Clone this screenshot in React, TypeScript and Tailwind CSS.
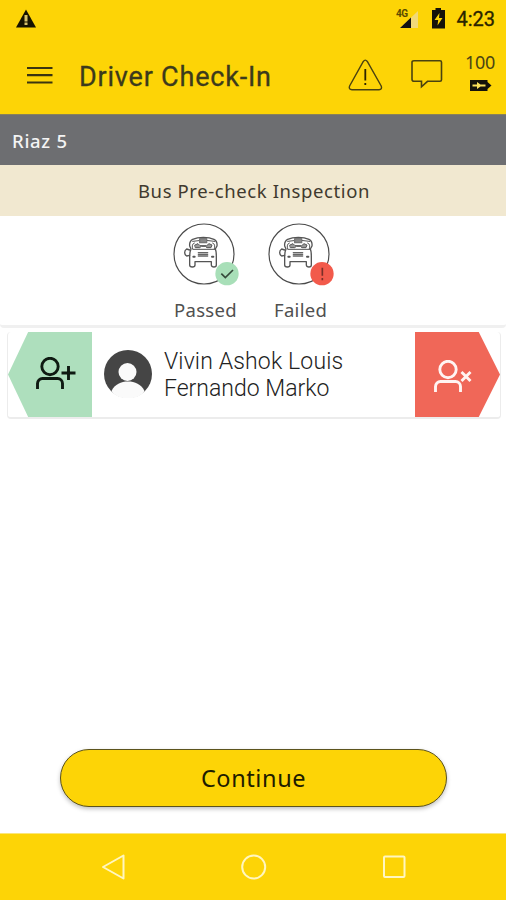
import type { ReactNode } from 'react';

function BusIcon({ children }: { children: ReactNode }) {
  return (
    <svg viewBox="62 32 210 198" className="h-[66px] w-[70px] ml-[7px]" fill="none">
      <circle cx="161" cy="131" r="90" stroke="#4a4a4a" strokeWidth="3.5" />
      <g stroke="#555" strokeWidth="4" strokeLinejoin="round" strokeLinecap="round">
        <path d="M118 140c0-12 1-18 4-24l-4-9c-1-10 3-17 9-20 17-8 47-8 64 0 8 4 10 11 9 20l-5 9c3 6 3 12 3 24v24c0 8-14 8-15 0v-10h-49v10c0 8-16 8-16 0z" />
        <path d="M127 93q32-8 66 0" strokeWidth="3" />
        <path d="M148 85h21v12h-21z" fill="#888" stroke="#777" />
        <path d="M127 116c-3-8-1-17 5-18M192 116c3-8 1-17-5-18" strokeWidth="3" />
        <path d="M134 104l9-4 6 6h20l7-6 9 4-3 8h-12l-5-4h-12l-5 4h-12z" fill="#999" strokeWidth="3" />
        <path d="M128 117h65" strokeWidth="3" />
        <path d="M118 119l-9-3c-8 5-8 16 0 21l9-2" />
        <path d="M144 127h28M144 132h28M144 137h28" stroke="#666" />
        <path d="M129 139h4M185 139h4" strokeWidth="6" />
      </g>
      {children}
    </svg>
  );
}

function PersonIcon() {
  return (
    <>
      <circle cx="14" cy="9.5" r="8.2" />
      <path d="M1.5 32v-5.5a5 5 0 0 1 5-5h15a5 5 0 0 1 5 5V32" />
    </>
  );
}

function StatusBar() {
  return (
    <div className="flex h-[37px] items-center pl-[15px] pr-[11px]">
      <svg viewBox="0 0 22 20" className="h-5 w-[22px]">
        <path d="M11 0.5L21 18.5H1z" fill="#171300" />
        <path d="M11 6v6.5M11 13.5v2.5" stroke="#d9c36a" strokeWidth="3" />
      </svg>
      <div className="ml-auto flex items-center">
        <svg viewBox="0 0 26 22" className="h-[22px] w-[26px] mr-[11px]">
          <path d="M24 3v17H6z" fill="#f1d978" />
          <path d="M17 9.5v10.5H6z" fill="#111" />
          <text x="2" y="9" fontSize="10" fontWeight="700" fontFamily="Roboto, sans-serif" fill="#5b4b00" textLength="12">4G</text>
        </svg>
        <svg viewBox="0 0 15 21" className="h-[21px] w-[15px] mr-[10px]">
          <path d="M4.5 0h5.500v2H14v18.500H1V2h3.500z" fill="#15120a" />
          <path d="M8.500 5L3.500 12h3.700l-.7 5.500 5-7.500H8z" fill="#fbd405" />
        </svg>
        <span className="font-[Roboto,sans-serif] text-[20px] leading-none text-[#2a2400] [-webkit-text-stroke:0.3px_#2a2400]">4:23</span>
      </div>
    </div>
  );
}

function Header() {
  return (
    <header className="flex h-[77px] pl-[27px]">
      <svg viewBox="0 0 26 18" className="mt-[29px] h-[18px] w-[26px]" stroke="#3a3410" strokeWidth="2.2">
        <path d="M0 2h25.500M0 9.200h25.500M0 16.500h25.500" />
      </svg>
      <h1 className="ml-[26px] mt-[24px] w-[200px] whitespace-nowrap font-[Roboto,sans-serif] text-[27px] leading-8 tracking-[0.8px] text-[#3c3a1c] [-webkit-text-stroke:0.3px_#3c3a1c]">
        Driver Check-In
      </h1>
      <svg viewBox="0 0 35 32" className="ml-[69px] mt-[22px] h-8 w-[35px] shrink-0" fill="none" stroke="#4a4210" strokeWidth="1.400">
        <path d="M15.300 2.500Q17.300-.2 19.300 2.500L33.200 27Q34.500 30.500 31 30.700H4Q.3 30.500 1.600 27z" />
        <path d="M17.300 10v11.500M17.300 24v2" stroke="#2b2500" strokeWidth="1.800" />
      </svg>
      <svg viewBox="0 0 34 30" className="ml-[27px] mt-[22px] h-[30px] w-[34px] shrink-0" fill="none" stroke="#4a4210" strokeWidth="1.600">
        <path d="M4 1.800h26q1.500 0 1.500 1.500v17.500q0 1.500-1.500 1.500H17.500l-6 5.500v-5.500H4q-2 0-2-2V3.300q0-1.500 2-1.500z" />
      </svg>
      <div className="ml-[20px] mt-[15px] flex w-8 flex-col items-center">
        <span className="font-['Noto_Sans',sans-serif] text-[18px] leading-5 tracking-[-0.3px] text-[#4a4414]">100</span>
        <svg viewBox="0 0 23 11" className="mt-[8px] h-[11px] w-[23px]">
          <path d="M1 0h17.500v2l4 3.500-4 3.500v2H1z" fill="#15120a" />
          <path d="M3.500 4.500h4.500V2l3.500 2.500h5v2h-5L8 9V6.500H3.500z" fill="#fbe05a" />
        </svg>
      </div>
    </header>
  );
}

function Inspection() {
  return (
    <section className="h-[112px] rounded-b-sm border-b-[3px] border-[#f0f0f0] bg-white pl-[164px]">
      <div className="flex pt-[5px] text-[18.500px] leading-6 text-[#505050]">
        <div className="flex w-[95px] flex-col">
          <BusIcon>
            <circle cx="230" cy="190" r="35" fill="#a8dfb8" />
            <path d="M213 190l12 12 23-23" stroke="#354a3a" strokeWidth="5" />
          </BusIcon>
          <span className="mt-[11px] ml-[10px] tracking-[0.3px]">Passed</span>
        </div>
        <div className="flex w-[95px] flex-col">
          <BusIcon>
            <circle cx="230" cy="190" r="35" fill="#f25a4b" />
            <path d="M231 172v24M231 203v7" stroke="#7a2f28" strokeWidth="5" />
          </BusIcon>
          <span className="mt-[11px] ml-[15px] tracking-[0.3px]">Failed</span>
        </div>
      </div>
    </section>
  );
}

function DriverCard() {
  return (
    <section className="ml-[7px] mr-[5px] mt-[4px] flex h-[87px] rounded-sm border-x border-b-2 border-[#ececec] bg-white">
      <button className="flex h-[85px] w-[84px] shrink-0 bg-[#aedfbd] [clip-path:polygon(24%_0,100%_0,100%_100%,24%_100%,0_50%)]">
        <svg viewBox="0 0 40 33" className="ml-[28px] mt-[25px] h-[33px] w-10" fill="none" stroke="#0f1a12" strokeWidth="2.900">
          <PersonIcon />
          <path d="M32.500 9v14M25.500 16h14" />
        </svg>
      </button>
      <svg viewBox="0 0 48 48" className="ml-[12px] mt-[18px] size-12 shrink-0">
        <circle cx="24" cy="24" r="24" fill="#454545" />
        <circle cx="23.500" cy="22" r="9" fill="#fafafa" />
        <path d="M7.500 41C11 34 17 31.500 24 31.500S37 34 40.500 41C35 51 13 51 7.500 41z" fill="#fafafa" />
      </svg>
      <p className="ml-[12px] mt-[16px] w-[251px] shrink-0 whitespace-nowrap font-[Roboto,sans-serif] text-[23px] leading-[27px] font-light text-[#222]">
        <span className="block tracking-[0.15px]">Vivin Ashok Louis</span>
        <span className="block">Fernando Marko</span>
      </p>
      <button className="flex h-[85px] w-[85px] shrink-0 bg-[#f06758] [clip-path:polygon(0_0,75%_0,100%_50%,75%_100%,0_100%)]">
        <svg viewBox="0 0 40 33" className="ml-[19px] mt-[28px] h-[33px] w-10" fill="none" stroke="#fff4f2" strokeWidth="2.900">
          <PersonIcon />
          <path d="M27.500 12l9 9M36.500 12l-9 9" />
        </svg>
      </button>
    </section>
  );
}

export default function App() {
  return (
    <div className="flex h-[900px] w-[506px] flex-col overflow-hidden bg-white font-['Noto_Sans',sans-serif]">
      <div className="bg-[#fdd406]">
        <StatusBar />
        <Header />
      </div>
      <div className="h-[51px] border-t border-[#88815a] bg-[#6d6e71] pl-[12px] pt-[14px] text-[18.500px] leading-6 font-medium tracking-[0.7px] text-[#f4f4f4]">
        Riaz 5
      </div>
      <h2 className="h-[51px] bg-[#f1e8d0] pt-[14px] pl-[2px] text-center text-[18.500px] leading-6 tracking-[0.6px] text-[#40392e]">
        Bus Pre-check Inspection
      </h2>
      <Inspection />
      <DriverCard />
      <button className="mr-[59px] ml-[60px] mt-auto mb-[26px] h-[58px] shrink-0 rounded-full border border-[#5c531c] bg-[#fdd406] pt-[2px] text-[23.500px] tracking-[0.6px] text-[#201c00] shadow-[0_2px_4px_rgba(0,0,0,0.25)]">
        Continue
      </button>
      <nav className="flex h-[67px] shrink-0 items-center border-t border-[#fbe67a] bg-[#fdd406] pl-[101px]">
        <svg viewBox="0 0 306 28" className="h-7 w-[306px]" fill="none" stroke="#fff6c0" strokeWidth="2">
          <path d="M22.500 2.500v23L2 14z" strokeLinejoin="round" />
          <circle cx="152.700" cy="14" r="11.500" />
          <rect x="283" y="3.500" width="20.500" height="20.500" rx="1" />
        </svg>
      </nav>
    </div>
  );
}
